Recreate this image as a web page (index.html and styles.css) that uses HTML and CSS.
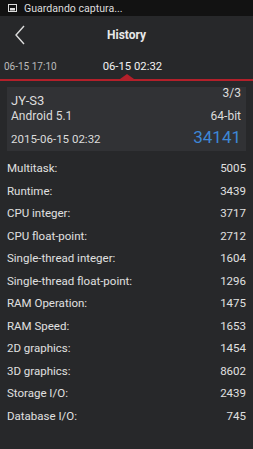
FILE: index.html
```html
<!DOCTYPE html>
<html lang="en">
<head>
    <meta charset="UTF-8">
    <meta name="viewport" content="width=device-width, initial-scale=1.0">
    <title>History</title>
    <link rel="stylesheet" href="styles.css">
</head>
<body>
    <div class="status-bar">
        <svg class="status-icon" width="9" height="8" viewBox="0 0 9 8">
            <rect x="0.5" y="0.5" width="8" height="7" fill="none" stroke="#ddd" stroke-width="1"/>
            <rect x="2" y="4" width="5" height="2.5" fill="#ddd"/>
        </svg>
        <span>Guardando captura...</span>
    </div>
    <div class="app-header">
        <svg class="back-icon" width="12" height="20" viewBox="0 0 12 20">
            <path d="M10 1 L2 10 L10 19" fill="none" stroke="#ddd" stroke-width="1.4"/>
        </svg>
        <h1>History</h1>
    </div>
    <div class="tabs">
        <span class="tab">06-15 17:10</span>
        <span class="tab active">06-15 02:32</span>
        <div class="tab-marker"></div>
    </div>
    <div class="summary-card">
        <div class="card-row top">
            <span class="device">JY-S3</span>
            <span class="page">3/3</span>
        </div>
        <div class="card-row">
            <span>Android 5.1</span>
            <span>64-bit</span>
        </div>
        <div class="card-row bottom">
            <span class="date">2015-06-15 02:32</span>
            <span class="total">34141</span>
        </div>
    </div>
    <ul class="scores">
        <li><span>Multitask:</span><span>5005</span></li>
        <li><span>Runtime:</span><span>3439</span></li>
        <li><span>CPU integer:</span><span>3717</span></li>
        <li><span>CPU float-point:</span><span>2712</span></li>
        <li><span>Single-thread integer:</span><span>1604</span></li>
        <li><span>Single-thread float-point:</span><span>1296</span></li>
        <li><span>RAM Operation:</span><span>1475</span></li>
        <li><span>RAM Speed:</span><span>1653</span></li>
        <li><span>2D graphics:</span><span>1454</span></li>
        <li><span>3D graphics:</span><span>8602</span></li>
        <li><span>Storage I/O:</span><span>2439</span></li>
        <li><span>Database I/O:</span><span>745</span></li>
    </ul>
</body>
</html>
```
FILE: styles.css
```css
body {
    margin: 0;
    font-family: Roboto, 'Noto Sans', sans-serif;
    background-color: #27282a;
    color: #e2e2e2;
    min-height: 449px;
}
.status-bar {
    height: 16px;
    background-color: #121212;
    display: flex;
    align-items: center;
    padding-left: 8px;
    font-size: 10.6px;
    color: #dcdcdc;
}
.status-icon {
    margin-right: 7px;
}
.app-header {
    height: 38px;
    display: flex;
    align-items: center;
    justify-content: center;
    position: relative;
}
.back-icon {
    position: absolute;
    left: 14px;
    top: 9px;
}
.app-header h1 {
    margin: 0;
    font-size: 12px;
    font-weight: bold;
    color: #e8e8e8;
}
.tabs {
    position: relative;
    height: 25px;
    display: flex;
    align-items: center;
    border-bottom: 2px solid #b3202a;
}
.tab {
    font-size: 10px;
    color: #bbb;
    padding-left: 4px;
}
.tab.active {
    font-size: 11.3px;
    color: #f2f2f2;
    margin-left: 42px;
}
.tab-marker {
    position: absolute;
    left: 120px;
    bottom: 0;
    width: 0;
    height: 0;
    border-left: 7px solid transparent;
    border-right: 7px solid transparent;
    border-bottom: 5px solid #b3202a;
}
.summary-card {
    margin: 6px 7px 0;
    background-color: #313235;
    padding: 0 5px 5px 4px;
}
.card-row {
    display: flex;
    justify-content: space-between;
    align-items: center;
    font-size: 12px;
    line-height: 14px;
    height: 14px;
    color: #dcdcdc;
}
.card-row.top {
    height: 22px;
    align-items: flex-end;
}
.card-row.bottom {
    height: 23px;
    align-items: flex-end;
}
.device {
    font-size: 13px;
    line-height: 16px;
}
.page {
    font-size: 12px;
    line-height: 13px;
    align-self: flex-start;
}
.date {
    font-size: 11.5px;
}
.total {
    font-size: 17px;
    line-height: 18px;
    color: #3d87d6;
}
.scores {
    list-style: none;
    margin: 6px 0 0;
    padding: 0 7px;
}
.scores li {
    display: flex;
    justify-content: space-between;
    align-items: center;
    height: 22.5px;
    font-size: 11.5px;
    color: #e0e0e0;
}
```
